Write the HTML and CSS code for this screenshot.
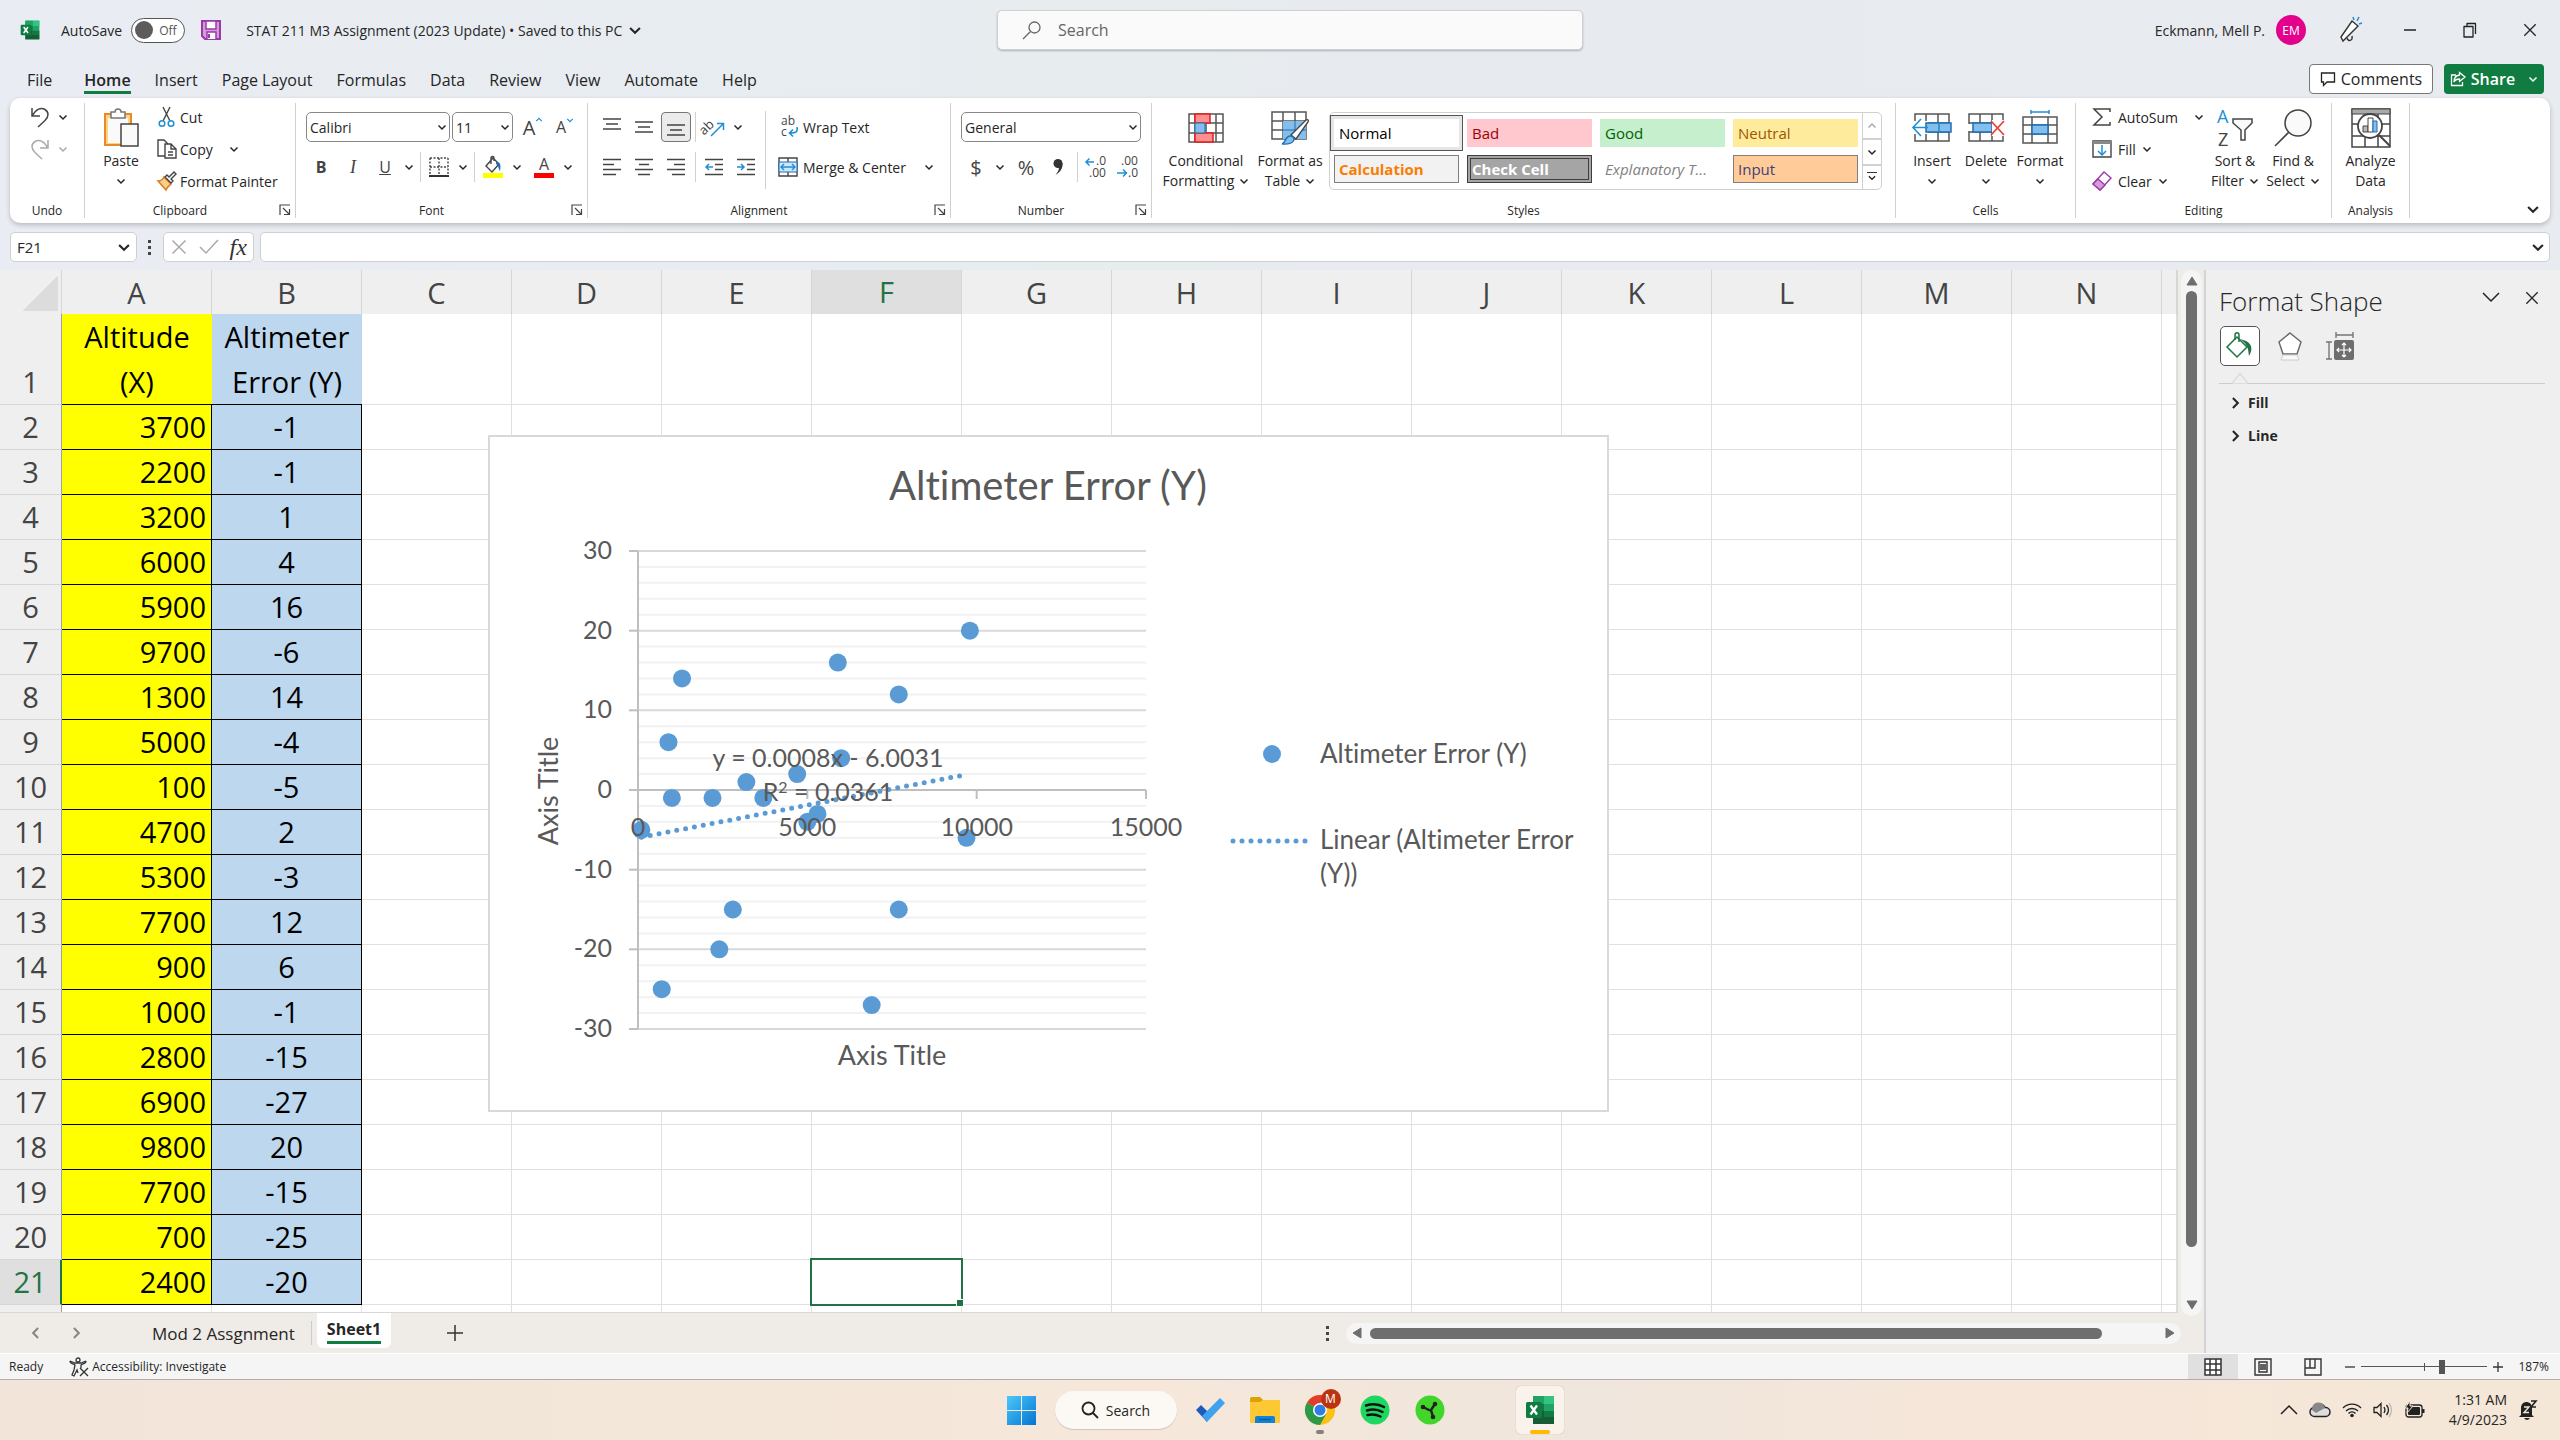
FILE: index.html
```html
<!DOCTYPE html>
<html lang="en">
<head>
    <meta charset="UTF-8">
    <meta name="viewport" content="width=device-width, initial-scale=1.0">
    <title>STAT 211 M3 Assignment (2023 Update) - Excel</title>
    <link rel="stylesheet" href="styles.css">
</head>
<body>
    <!-- Shared icons -->
    <svg class="sprite" width="0" height="0">
        <symbol id="chev" viewBox="0 0 10 10"><path d="M1.5 3.5 5 7l3.5-3.5" fill="none" stroke="currentColor" stroke-width="1.5"/></symbol>
        <symbol id="launch" viewBox="0 0 12 12"><path d="M1 11V1h10M4 4l6 6M10.500 5v5.500H5" fill="none" stroke="#444" stroke-width="1.2"/></symbol>
        <symbol id="excel" viewBox="0 0 30 30">
            <path d="M8 1h21v28H8z" fill="#21a366"/>
            <path d="M19 1h10v8H19z" fill="#33c481"/>
            <path d="M8 1h11v8H8z" fill="#21a366"/>
            <path d="M8 9h11v7H8z" fill="#107c41"/>
            <path d="M8 16h11v6H8z" fill="#185c37"/>
            <path d="M19 16h10v6H19z" fill="#107c41"/>
            <path d="M8 22h21v7H8z" fill="#185c37"/>
            <rect x="1" y="7" width="16" height="16" rx="1.500" fill="#107c41"/>
            <path d="M5.500 10.500 12 19.500M12 10.500 5.500 19.500" stroke="#fff" stroke-width="2.300"/>
        </symbol>
        <symbol id="lens" viewBox="0 0 20 20"><path d="M12.500 2a5.500 5.500 0 1 1 0 11 5.500 5.500 0 0 1 0-11zM8.500 11.500 1 19" fill="none" stroke="currentColor" stroke-width="1.3"/></symbol>
        <symbol id="cross" viewBox="0 0 16 16"><path d="M1.500 1.500l13 13M14.500 1.500l-13 13" stroke="currentColor" stroke-width="1.5"/></symbol>
    </svg>

    <header class="titlebar">
        <div class="title-left">
            <svg class="i20" viewBox="0 0 30 30"><use href="#excel"/></svg>
            <label class="autosave">AutoSave
                <span class="toggle"><input type="checkbox" aria-label="AutoSave"><span>Off</span></span>
            </label>
            <button class="save" aria-label="Save">
                <svg width="20" height="20" viewBox="0 0 20 20"><path d="M1 1h18v18H4l-3-3z" fill="#d69bdc" stroke="#9a3aa8" stroke-width="2"/><path d="M5 1h10v8H5zM6 19v-7h9v7" fill="#fff" stroke="#9a3aa8" stroke-width="1.500"/><path d="M8 14v4" stroke="#9a3aa8" stroke-width="2"/></svg>
            </button>
            <button class="doc-name">STAT 211 M3 Assignment (2023 Update) • Saved to this PC <svg class="i14"><use href="#chev"/></svg></button>
        </div>
        <label class="search">
            <svg class="i20"><use href="#lens"/></svg>
            <input type="text" placeholder="Search" aria-label="Search">
        </label>
        <div class="title-right">
            <span>Eckmann, Mell P.</span>
            <button class="avatar">EM</button>
            <button class="win" aria-label="Coming soon">
                <svg width="24" height="28" viewBox="0 0 24 28"><path d="M3 21 14 5l6 5L5 25z" fill="#fff" stroke="#333" stroke-width="1.400"/><path d="M9 22c1 4 6 3 5-2" fill="none" stroke="#333" stroke-width="1.400"/><path d="m16 4-1-3M19 5l2-4M21 8l3-1" stroke="#1e8fd5" stroke-width="1.500"/></svg>
            </button>
            <button class="win" aria-label="Minimize"><svg width="14" height="14"><path d="M1 7h12" stroke="#222" stroke-width="1.500"/></svg></button>
            <button class="win" aria-label="Restore"><svg width="16" height="16" viewBox="0 0 16 16"><path d="M2 4.500h9V15H2zM5 4V1.500h8.500V12" fill="none" stroke="#222" stroke-width="1.300" stroke-linejoin="round"/></svg></button>
            <button class="win" aria-label="Close"><svg width="14" height="14"><use href="#cross"/></svg></button>
        </div>
    </header>

    <nav class="tabs">
        <a href="#">File</a>
        <a href="#" class="active">Home</a>
        <a href="#">Insert</a>
        <a href="#">Page Layout</a>
        <a href="#">Formulas</a>
        <a href="#">Data</a>
        <a href="#">Review</a>
        <a href="#">View</a>
        <a href="#">Automate</a>
        <a href="#">Help</a>
        <div class="tab-actions">
            <button class="comments"><svg width="16" height="16" viewBox="0 0 16 16"><path d="M1.500 2h13v9H7l-3.500 3.500V11h-2z" fill="none" stroke="#222" stroke-width="1.300"/></svg>Comments</button>
            <button class="share"><svg width="16" height="16" viewBox="0 0 16 16"><path d="M6 4H1.500v10.500h11V11M9.500 1.500 15 6l-5.500 4.500V8C6.500 8 5 9 4 11c0-4 2-6.500 5.500-7z" fill="none" stroke="#fff" stroke-width="1.300"/></svg>Share<svg class="i10 share-chev"><use href="#chev"/></svg></button>
        </div>
    </nav>

    <section class="ribbon">
        <div class="group g-undo">
            <div class="group-body rows">
                <button class="split" aria-label="Undo"><svg width="20" height="22" viewBox="0 0 20 22"><path d="M2 2v8h8M2.500 9.500C6 3 11 1 15 3.500s4 7 0 11L8 21" fill="none" stroke="#444" stroke-width="1.500"/></svg><svg class="i10"><use href="#chev"/></svg></button>
                <button class="split off" aria-label="Redo"><svg width="20" height="22" viewBox="0 0 20 22"><path d="M18 2v8h-8M17.500 9.500C14 3 9 1 5 3.500s-4 7 0 11L12 21" fill="none" stroke="#aaa" stroke-width="1.500"/></svg><svg class="i10"><use href="#chev"/></svg></button>
            </div>
            <div class="group-label"><span>Undo</span></div>
        </div>

        <div class="group g-clip">
            <div class="group-body">
                <button class="big">
                    <svg width="36" height="40" viewBox="0 0 36 40"><path d="M2 6h26v31H2z" fill="#fbd67f" stroke="#e8892b" stroke-width="2"/><path d="M5 10h20v25H5z" fill="#fafafa"/><path d="M8 4h4c0-4 6-4 6 0h4v6H8z" fill="#fff" stroke="#777" stroke-width="1.500"/><path d="M18 16h17v22H18z" fill="#fafafa" stroke="#444" stroke-width="1.500"/></svg>
                    <span>Paste</span><svg class="i10"><use href="#chev"/></svg>
                </button>
                <div class="rows">
                    <button class="item"><svg width="20" height="22" viewBox="0 0 20 22"><path d="M6 1l7 14M13 1 6 15" stroke="#444" stroke-width="1.400"/><circle cx="5" cy="17.500" r="2.800" fill="none" stroke="#1e8fd5" stroke-width="1.500"/><circle cx="14" cy="17.500" r="2.800" fill="none" stroke="#1e8fd5" stroke-width="1.500"/></svg>Cut</button>
                    <button class="item"><svg width="20" height="20" viewBox="0 0 20 20"><path d="M8 17H1V1h6l4 4" fill="none" stroke="#444" stroke-width="1.400"/><path d="M8 5h6l5 5v9H8zM14 5v5h5M11 13h5M11 16h5" fill="#fff" stroke="#444" stroke-width="1.400"/></svg>Copy<svg class="i10 far"><use href="#chev"/></svg></button>
                    <button class="item"><svg width="20" height="20" viewBox="0 0 20 20"><path d="M1 10c4 0 5-2 6-4l7 7c-2 2-4 3-5 6z" fill="#f8cf8c" stroke="#e07b1a" stroke-width="1.500"/><path d="M8 6l6 6 2-2-2-2 5-5-2-2-5 5-2-2z" fill="#fff" stroke="#444" stroke-width="1.400"/></svg>Format Painter</button>
                </div>
            </div>
            <div class="group-label"><span>Clipboard</span><button class="launch" aria-label="Clipboard options"><svg width="12" height="12"><use href="#launch"/></svg></button></div>
        </div>

        <div class="group g-font">
            <div class="group-body lines">
                <div class="line">
                    <span class="combo combo-font"><select aria-label="Font"><option>Calibri</option></select><svg class="i10"><use href="#chev"/></svg></span>
                    <span class="combo combo-size"><select aria-label="Font size"><option>11</option></select><svg class="i10"><use href="#chev"/></svg></span>
                    <button class="ib" aria-label="Increase font size"><span class="glyph-lg">A</span><svg class="i8 up blue"><use href="#chev"/></svg></button>
                    <button class="ib" aria-label="Decrease font size"><span class="glyph">A</span><svg class="i8 blue"><use href="#chev"/></svg></button>
                </div>
                <div class="line">
                    <button class="ib"><b>B</b></button>
                    <button class="ib"><i class="serif">I</i></button>
                    <button class="ib"><u>U</u></button>
                    <button class="cb" aria-label="Underline options"><svg class="i10"><use href="#chev"/></svg></button>
                    <span class="sep"></span>
                    <button class="ib" aria-label="Borders"><svg width="20" height="20" viewBox="0 0 20 20"><path d="M1 1h18M1 1v17M19 1v17M10 1v17M1 10h18" stroke="#444" stroke-width="1.400" stroke-dasharray="2 1.500"/><path d="M0 19h20" stroke="#333" stroke-width="2"/></svg></button>
                    <button class="cb" aria-label="Border options"><svg class="i10"><use href="#chev"/></svg></button>
                    <span class="sep"></span>
                    <button class="ib" aria-label="Fill color"><svg width="20" height="22" viewBox="0 0 20 22"><path d="M10 2 3 10l6 6 7-8zM8 8V2c0-2 3-2 3 0v3" fill="#fff" stroke="#444" stroke-width="1.400"/><path d="M13 6c5 0 5 4 4 9-2-3-1-5-4-7" fill="#1e6fb5"/><path d="M0 17h20v5H0z" fill="#ff0"/></svg></button>
                    <button class="cb" aria-label="Fill color options"><svg class="i10"><use href="#chev"/></svg></button>
                    <button class="ib color-a" aria-label="Font color"><span>A</span></button>
                    <button class="cb" aria-label="Font color options"><svg class="i10"><use href="#chev"/></svg></button>
                </div>
            </div>
            <div class="group-label"><span>Font</span><button class="launch" aria-label="Font settings"><svg width="12" height="12"><use href="#launch"/></svg></button></div>
        </div>

        <div class="group g-align">
            <div class="group-body">
                <div class="lines">
                    <div class="line">
                        <button class="ib" aria-label="Top align"><svg width="18" height="18"><path d="M0 1h18M3 6h12M0 11h18" stroke="#444" stroke-width="1.500"/></svg></button>
                        <button class="ib" aria-label="Middle align"><svg width="18" height="18"><path d="M0 4h18M3 9h12M0 14h18" stroke="#444" stroke-width="1.500"/></svg></button>
                        <button class="ib on" aria-label="Bottom align"><svg width="18" height="18"><path d="M0 7h18M3 12h12M0 17h18" stroke="#444" stroke-width="1.500"/></svg></button>
                        <span class="sep"></span>
                        <button class="ib" aria-label="Orientation"><svg width="22" height="22" viewBox="0 0 22 22"><text x="-3" y="14" font-size="13" transform="rotate(-45 6 12)" fill="#444">ab</text><path d="M8 20 20 8M14 7.500h6.500V14" fill="none" stroke="#1e8fd5" stroke-width="1.500"/></svg></button>
                        <button class="cb" aria-label="Orientation options"><svg class="i10"><use href="#chev"/></svg></button>
                    </div>
                    <div class="line">
                        <button class="ib" aria-label="Align left"><svg width="18" height="18"><path d="M0 1.500h18M0 6.500h11M0 11.500h18M0 16.500h13" stroke="#444" stroke-width="1.500"/></svg></button>
                        <button class="ib" aria-label="Center"><svg width="18" height="18"><path d="M0 1.500h18M4 6.500h10M0 11.500h18M3 16.500h12" stroke="#444" stroke-width="1.500"/></svg></button>
                        <button class="ib" aria-label="Align right"><svg width="18" height="18"><path d="M0 1.500h18M7 6.500h11M0 11.500h18M5 16.500h13" stroke="#444" stroke-width="1.500"/></svg></button>
                        <span class="sep"></span>
                        <button class="ib" aria-label="Decrease indent"><svg width="20" height="18"><path d="M1 1.500h18M11 6.500h8M11 11.500h8M1 16.500h18" stroke="#444" stroke-width="1.500"/><path d="M9 9H2M5 6 2 9l3 3" fill="none" stroke="#1e8fd5" stroke-width="1.500"/></svg></button>
                        <button class="ib" aria-label="Increase indent"><svg width="20" height="18"><path d="M1 1.500h18M11 6.500h8M11 11.500h8M1 16.500h18" stroke="#444" stroke-width="1.500"/><path d="M1 9h7M5 6l3 3-3 3" fill="none" stroke="#1e8fd5" stroke-width="1.500"/></svg></button>
                    </div>
                </div>
                <span class="sep tall"></span>
                <div class="lines wrap-col">
                    <button class="item"><svg width="20" height="22" viewBox="0 0 20 22"><text x="3" y="9" font-size="12" fill="#444">ab</text><text x="3" y="20" font-size="12" fill="#444">c</text><path d="M19 11c1 5-1 6-7 6M15 13.500 11.500 17l3.500 3.500" fill="none" stroke="#1e8fd5" stroke-width="1.600"/></svg>Wrap Text</button>
                    <button class="item"><svg width="20" height="20" viewBox="0 0 20 20"><path d="M1 1h18v18H1zM10 1v4M10 15v4" fill="#fff" stroke="#444" stroke-width="1.400"/><path d="M1 5h18v10H1z" fill="#cfe6f7" stroke="#1e6fb5"/><path d="M3 10h14M6 7l-3 3 3 3M14 7l3 3-3 3" fill="none" stroke="#1e8fd5" stroke-width="1.400"/></svg>Merge &amp; Center<svg class="i10 far"><use href="#chev"/></svg></button>
                </div>
            </div>
            <div class="group-label"><span>Alignment</span><button class="launch" aria-label="Alignment settings"><svg width="12" height="12"><use href="#launch"/></svg></button></div>
        </div>

        <div class="group g-num">
            <div class="group-body lines">
                <div class="line">
                    <span class="combo combo-num"><select aria-label="Number format"><option>General</option></select><svg class="i10"><use href="#chev"/></svg></span>
                </div>
                <div class="line">
                    <button class="ib glyph-lg">$</button>
                    <button class="cb" aria-label="Currency options"><svg class="i10"><use href="#chev"/></svg></button>
                    <button class="ib glyph-lg percent">%</button>
                    <button class="ib" aria-label="Comma style"><svg width="12" height="18" viewBox="0 0 12 18"><circle cx="6" cy="5.500" r="4.500" fill="#333"/><path d="M10.500 5c.5 5-2 9-7 12 3-4 4-6 3-9" fill="#333"/></svg></button>
                    <span class="sep"></span>
                    <button class="ib" aria-label="Increase decimal"><svg width="22" height="22" viewBox="0 0 22 22"><text x="11" y="9" font-size="12" fill="#444">.0</text><text x="4" y="21" font-size="12" fill="#444">.00</text><path d="M9 6H1M4.500 2.500 1 6l3.500 3.500" fill="none" stroke="#1e8fd5" stroke-width="1.500"/></svg></button>
                    <button class="ib" aria-label="Decrease decimal"><svg width="22" height="22" viewBox="0 0 22 22"><text x="4" y="9" font-size="12" fill="#444">.00</text><text x="11" y="21" font-size="12" fill="#444">.0</text><path d="M0 17h9M6 13.500l3.500 3.500L6 20.500" fill="none" stroke="#1e8fd5" stroke-width="1.500"/></svg></button>
                </div>
            </div>
            <div class="group-label"><span>Number</span><button class="launch" aria-label="Number settings"><svg width="12" height="12"><use href="#launch"/></svg></button></div>
        </div>

        <div class="group g-styles">
            <div class="group-body">
                <button class="big w-cf">
                    <svg width="36" height="30" viewBox="0 0 36 30"><path d="M1 1h34v28H1zM1 10h34M1 20h34M7 1v28M18 1v28M28 1v28" fill="#fff" stroke="#555" stroke-width="1.500"/><path d="M7 1h15v9H7zM7 20h18v9H7z" fill="#ff8f8f" stroke="#e02020" stroke-width="1.500"/><path d="M7 10h10v10H7z" fill="#83beec" stroke="#1e6fb5"/></svg>
                    <span>Conditional</span><span>Formatting <svg class="i10"><use href="#chev"/></svg></span>
                </button>
                <button class="big w-fat">
                    <svg width="38" height="34" viewBox="0 0 38 34"><path d="M1 1h34v27H1zM1 10h34M1 19h34M12 1v27M24 1v27" fill="#fff" stroke="#555" stroke-width="1.500"/><path d="M12 10h23v18H12z" fill="#83beec"/><path d="M12 19h23M24 10v18" stroke="#1e6fb5"/><path d="M20 24 35 9c2-1 3 0 2 2L25 28z" fill="#fff" stroke="#444" stroke-width="1.400"/><path d="M11 33c4-1 3-9 9-8 5 1 5 9-9 8z" fill="#83beec" stroke="#1e6fb5" stroke-width="1.400"/></svg>
                    <span>Format as</span><span>Table <svg class="i10"><use href="#chev"/></svg></span>
                </button>
                <div class="gallery">
                    <div class="swatches">
                        <button class="sw normal">Normal</button>
                        <button class="sw bad">Bad</button>
                        <button class="sw good">Good</button>
                        <button class="sw neutral">Neutral</button>
                        <button class="sw calc">Calculation</button>
                        <button class="sw check">Check Cell</button>
                        <button class="sw expl">Explanatory T...</button>
                        <button class="sw input">Input</button>
                    </div>
                    <div class="gallery-nav">
                        <button class="off" aria-label="Scroll up"><svg class="i10 up"><use href="#chev"/></svg></button>
                        <button aria-label="Scroll down"><svg class="i10"><use href="#chev"/></svg></button>
                        <button class="more" aria-label="More styles"><svg class="i10"><use href="#chev"/></svg></button>
                    </div>
                </div>
            </div>
            <div class="group-label"><span>Styles</span></div>
        </div>

        <div class="group g-cells">
            <div class="group-body">
                <button class="big w-cell">
                    <svg width="40" height="36" viewBox="0 0 40 36"><path d="M3 4h34v27H3zM14 4v27M26 4v27M3 13h34M3 22h34" fill="#fff" stroke="#555" stroke-width="1.500"/><path d="M0 11h16v13H0z" fill="#fff"/><path d="M14 13h25v9H14z" fill="#83beec" stroke="#1e6fb5" stroke-width="1.500"/><path d="M27 13v9M16 17.500H2M9 9l-8 8.500L9 26" fill="none" stroke="#1e8fd5" stroke-width="1.600"/></svg>
                    <span>Insert</span><svg class="i10"><use href="#chev"/></svg>
                </button>
                <button class="big w-cell">
                    <svg width="40" height="36" viewBox="0 0 40 36"><path d="M3 4h34v27H3zM14 4v27M26 4v27M3 13h34M3 22h34" fill="#fff" stroke="#555" stroke-width="1.500"/><path d="M0 14h6v7H0z" fill="#fff"/><path d="M7 13h19v9H7z" fill="#83beec" stroke="#1e6fb5" stroke-width="1.500"/><path d="M26 10h14v16H26z" fill="#fff"/><path d="m25 11 13 14M38 11 25 25" stroke="#e8413c" stroke-width="1.800"/></svg>
                    <span>Delete</span><svg class="i10"><use href="#chev"/></svg>
                </button>
                <button class="big w-cell">
                    <svg width="40" height="36" viewBox="0 0 40 36"><path d="M3 7h34v26H3zM12 7v26M28 7v26M3 15h34M3 24h34" fill="#fff" stroke="#555" stroke-width="1.500"/><path d="M12 15h16v9H12z" fill="#83beec" stroke="#1e6fb5" stroke-width="1.500"/><path d="M11 2h18M11 0v4M29 0v4" stroke="#1e8fd5" stroke-width="1.500"/></svg>
                    <span>Format</span><svg class="i10"><use href="#chev"/></svg>
                </button>
            </div>
            <div class="group-label"><span>Cells</span></div>
        </div>

        <div class="group g-edit">
            <div class="group-body">
                <div class="rows edit-col">
                    <button class="item"><svg width="20" height="20" viewBox="0 0 20 20"><path d="M18 5V2H2l8 8-8 8h16v-3" fill="none" stroke="#444" stroke-width="1.500"/></svg>AutoSum<svg class="i10 push"><use href="#chev"/></svg></button>
                    <button class="item"><svg width="20" height="20" viewBox="0 0 20 20"><path d="M1 2h18v16H1z" fill="#fff" stroke="#444" stroke-width="1.400"/><path d="M1 2h18v3H1z" fill="#888"/><path d="M10 6v10M6 12l4 4 4-4" fill="none" stroke="#1e8fd5" stroke-width="1.500"/></svg>Fill<svg class="i10"><use href="#chev"/></svg></button>
                    <button class="item"><svg width="20" height="20" viewBox="0 0 20 20"><path d="m12 1 7 6-11 12-7-6z" fill="#fff" stroke="#9a3aa8" stroke-width="1.400"/><path d="m6 8 7 6-5 5-7-6z" fill="#d69bdc" stroke="#9a3aa8" stroke-width="1.400"/></svg>Clear<svg class="i10"><use href="#chev"/></svg></button>
                </div>
                <button class="big w-ed">
                    <svg width="38" height="38" viewBox="0 0 38 38"><text x="1" y="14" font-size="18" fill="#1e8fd5">A</text><text x="2" y="37" font-size="18" fill="#444">Z</text><path d="M17 10h19v4l-7 7v10h-4V21l-8-7z" fill="#fafafa" stroke="#444" stroke-width="1.500"/></svg>
                    <span>Sort &amp;</span><span>Filter <svg class="i10"><use href="#chev"/></svg></span>
                </button>
                <button class="big w-ed">
                    <svg width="38" height="38" viewBox="0 0 38 38"><circle cx="24" cy="14" r="13" fill="#fafafa" stroke="#444" stroke-width="1.500"/><path d="M15 23 1 37" stroke="#444" stroke-width="1.600"/></svg>
                    <span>Find &amp;</span><span>Select <svg class="i10"><use href="#chev"/></svg></span>
                </button>
            </div>
            <div class="group-label"><span>Editing</span></div>
        </div>

        <div class="group g-an">
            <div class="group-body">
                <button class="big w-an">
                    <svg width="40" height="40" viewBox="0 0 40 40"><path d="M1 1h38v38H1zM1 16h38M1 28h38M14 6v33M27 6v33" fill="#fff" stroke="#444" stroke-width="1.500"/><path d="M1 1h38v5H1z" fill="#aaa" stroke="#444"/><circle cx="19" cy="18" r="12" fill="#fff" stroke="#444" stroke-width="1.800"/><path d="m28 27 11 11" stroke="#444" stroke-width="2"/><path d="M12 18h5v6h-5z" fill="#bbb" stroke="#444"/><path d="M17 10h5v14h-5z" fill="#fff" stroke="#444"/><path d="M22 13h4v11h-4z" fill="#83beec" stroke="#1e6fb5"/></svg>
                    <span>Analyze</span><span>Data</span>
                </button>
            </div>
            <div class="group-label"><span>Analysis</span></div>
        </div>

        <button class="collapse" aria-label="Collapse ribbon"><svg class="i14"><use href="#chev"/></svg></button>
    </section>

    <section class="formula-bar">
        <label class="box name-box"><input type="text" value="F21" aria-label="Name box"><svg class="i14"><use href="#chev"/></svg></label>
        <span class="dots"><i></i><i></i><i></i></span>
        <div class="box fx-box">
            <button aria-label="Cancel"><svg width="16" height="16"><use href="#cross"/></svg></button>
            <button aria-label="Enter"><svg width="20" height="16"><path d="m1 8 6 6L19 1" fill="none" stroke="#aaa" stroke-width="1.500"/></svg></button>
            <button class="fx">fx</button>
        </div>
        <label class="box formula"><input type="text" aria-label="Formula"><svg class="i14"><use href="#chev"/></svg></label>
    </section>

    <main class="work">
        <div class="book">
            <div class="sheet-row">
                <div class="sheet">
                    <table id="grid">
                        <colgroup id="cols"></colgroup>
                        <thead></thead>
                        <tbody></tbody>
                    </table>
                    <svg id="chart" class="chart" width="1117" height="673" viewBox="0 0 1117 673"></svg>
                </div>
                <div class="vscroll">
                    <div class="track">
                        <svg width="12" height="10"><path d="M6 1 11 9H1z" fill="#6e6e6e" stroke="#6e6e6e" stroke-linejoin="round"/></svg>
                        <span class="thumb"></span>
                        <svg width="12" height="10"><path d="M6 9 11 1H1z" fill="#6e6e6e" stroke="#6e6e6e" stroke-linejoin="round"/></svg>
                    </div>
                </div>
            </div>
            <div class="sheet-tabs">
                <button class="nav-arrow" aria-label="Previous sheet"><svg class="i14 left"><use href="#chev"/></svg></button>
                <button class="nav-arrow" aria-label="Next sheet"><svg class="i14 right"><use href="#chev"/></svg></button>
                <button class="sheet-tab">Mod 2 Assgnment</button>
                <button class="sheet-tab current"><span>Sheet1</span></button>
                <button class="add" aria-label="New sheet"><svg width="16" height="16"><path d="M8 0v16M0 8h16" stroke="#333" stroke-width="1.500"/></svg></button>
                <span class="dots"><i></i><i></i><i></i></span>
                <div class="hscroll">
                    <svg width="10" height="12"><path d="M1 6 9 1v10z" fill="#6e6e6e" stroke="#6e6e6e" stroke-linejoin="round"/></svg>
                    <div class="hroom"><span class="thumb"></span></div>
                    <svg width="10" height="12"><path d="M9 6 1 1v10z" fill="#6e6e6e" stroke="#6e6e6e" stroke-linejoin="round"/></svg>
                </div>
            </div>
        </div>

        <aside class="pane">
            <div class="pane-head">
                <h2>Format Shape</h2>
                <button aria-label="Pane options"><svg width="20" height="12"><path d="m2 1 8 8 8-8" fill="none" stroke="#222" stroke-width="1.500"/></svg></button>
                <button aria-label="Close pane"><svg width="14" height="14"><use href="#cross"/></svg></button>
            </div>
            <div class="pane-icons">
                <button class="on" aria-label="Fill and line"><svg width="28" height="28" viewBox="0 0 28 28"><path d="M11 5 1 15l10 10 10-10z" fill="#fff" stroke="#217346" stroke-width="1.500"/><path d="M9 8V3c0-3 4-3 4 0v7" fill="none" stroke="#217346" stroke-width="1.500"/><path d="M14 7c9 2 15 7 9 17-1-6 0-11-9-17z" fill="#217346"/></svg></button>
                <button aria-label="Effects"><svg width="26" height="30" viewBox="0 0 26 30"><path d="m13 2 11 9-4 12H6L2 11z" fill="#fff" stroke="#666" stroke-width="1.400"/><path d="M6 24h14l2 5H4z" fill="#fafafa" stroke="#ccc"/></svg></button>
                <button aria-label="Size and properties"><svg width="28" height="28" viewBox="0 0 28 28"><path d="M10 3h17M10 0v6M27 0v6M3 10v17M0 10h6M0 27h6" stroke="#777" stroke-width="1.400"/><rect x="8" y="8" width="20" height="20" rx="2" fill="#6e6e6e"/><path d="M18 11v14M11 18h14M16 13l2-2 2 2M16 23l2 2 2-2M13 16l-2 2 2 2M23 16l2 2-2 2" fill="none" stroke="#fff" stroke-width="1.200"/></svg></button>
            </div>
            <div class="pane-line"><svg width="18" height="12"><path d="M0 11.500h1l8-10 8 10h1" fill="#efefef" stroke="#ccc"/></svg></div>
            <button class="section"><svg class="i14 right"><use href="#chev"/></svg>Fill</button>
            <button class="section"><svg class="i14 right"><use href="#chev"/></svg>Line</button>
        </aside>
    </main>

    <footer class="status">
        <span>Ready</span>
        <button class="access"><svg width="20" height="20" viewBox="0 0 20 20"><circle cx="9" cy="3" r="2" fill="none" stroke="#333" stroke-width="1.300"/><path d="M1 4c0 3 4 3 5 4l-1 5-2 5 2 1 3-6 1 3M17 4c0 3-4 3-5 4v3M1 4l5 2h6l5-2M11 11l8 8M19 11l-8 8" fill="none" stroke="#333" stroke-width="1.300"/></svg>Accessibility: Investigate</button>
        <div class="views">
            <button class="on" aria-label="Normal view"><svg width="18" height="18"><path d="M1 1h16v16H1zM1 6h16M1 12h16M6 1v16M12 1v16" fill="#fff" stroke="#333" stroke-width="1.500"/></svg></button>
            <button aria-label="Page layout view"><svg width="18" height="18"><path d="M1 1h16v16H1zM5 4h8v10H5zM6 7h6M6 9h6M6 11h6" fill="none" stroke="#333" stroke-width="1.400"/></svg></button>
            <button aria-label="Page break view"><svg width="18" height="18"><path d="M1 1h16v16H1zM1 10h10V1M6 1v9" fill="none" stroke="#333" stroke-width="1.400"/></svg></button>
        </div>
        <div class="zoom">
            <button aria-label="Zoom out"><svg width="12" height="12"><path d="M1 6h10" stroke="#333" stroke-width="1.300"/></svg></button>
            <input type="range" min="0" max="100" value="65" aria-label="Zoom">
            <button aria-label="Zoom in"><svg width="12" height="12"><path d="M1 6h10M6 1v10" stroke="#333" stroke-width="1.300"/></svg></button>
            <span class="pct">187%</span>
        </div>
    </footer>

    <div class="taskbar">
        <div class="apps">
            <button class="app" aria-label="Start"><svg width="29" height="29"><defs><linearGradient id="win" x1="0" y1="0" x2="29" y2="29" gradientUnits="userSpaceOnUse"><stop offset="0" stop-color="#4cc9fb"/><stop offset="1" stop-color="#0274d1"/></linearGradient></defs><path d="M0 0h14v14H0zM15 0h14v14H15zM0 15h14v14H0zM15 15h14v14H15z" fill="url(#win)"/></svg></button>
            <button class="task-search"><svg width="18" height="18"><circle cx="7.500" cy="7.500" r="6" fill="none" stroke="#222" stroke-width="1.800"/><path d="m12 12 5 5" stroke="#222" stroke-width="1.800"/></svg>Search</button>
            <button class="app" aria-label="To Do"><svg width="30" height="26" viewBox="0 0 30 26"><path d="M1 13 6 8l8 8-2 9z" fill="#1b5bbd"/><path d="M7 19 25 1l5 5-18 19z" fill="#3fa2ee"/></svg></button>
            <button class="app" aria-label="File Explorer"><svg width="30" height="28" viewBox="0 0 30 28"><path d="M0 3q0-2 2-2h8l3 3v6H0z" fill="#dba106"/><path d="M0 6h10l3-2h17v22q0 1-1 1H1q-1 0-1-1z" fill="#fdc834"/><path d="M5 27v-5q0-2 2-2h16q2 0 2 2v5z" fill="#1182d8"/><path d="M9 23.500h12" stroke="#0b5aa3" stroke-width="1.500"/></svg></button>
            <button class="app run" aria-label="Chrome">
                <svg width="30" height="30" viewBox="0 0 30 30"><circle cx="15" cy="15" r="15" fill="#fbc116"/><path d="M15 15 2 7.500A15 15 0 0 1 28 7.500H15z" fill="#e33b2e"/><path d="M2 7.500A15 15 0 0 0 15 30l6.500-11.500L15 15z" fill="#2d9a47"/><circle cx="15" cy="15" r="7" fill="#fff"/><circle cx="15" cy="15" r="5.500" fill="#2f7de9"/></svg>
                <span class="badge">M</span>
            </button>
            <button class="app" aria-label="Spotify"><svg width="30" height="30" viewBox="0 0 30 30"><circle cx="15" cy="15" r="14.500" fill="#1ed760"/><path d="M6 10.500c6-2 13-1.500 18 1.500M7 15.500c5-1.500 11-1 15.500 1.500M7.500 20c4-1 9-.5 13 1.500" fill="none" stroke="#111" stroke-width="2.500" stroke-linecap="round"/></svg></button>
            <button class="app" aria-label="Network"><svg width="30" height="30" viewBox="0 0 30 30"><circle cx="15" cy="15" r="14.500" fill="#43d62a"/><path d="M8 12l7 3.500M20 9l-4 6 2 7" fill="none" stroke="#222" stroke-width="2.500"/><circle cx="8" cy="12" r="2.300" fill="#222"/><circle cx="20" cy="9" r="2.300" fill="#222"/><circle cx="18" cy="22" r="2.300" fill="#222"/></svg></button>
            <span class="app"></span>
            <button class="app excel" aria-label="Excel"><svg width="30" height="30"><use href="#excel"/></svg></button>
        </div>
        <div class="tray">
            <button aria-label="Hidden icons"><svg width="18" height="12"><path d="m1 10 8-8 8 8" fill="none" stroke="#222" stroke-width="1.500"/></svg></button>
            <button aria-label="OneDrive"><svg width="22" height="16" viewBox="0 0 22 16"><path d="M6 14.500a4.500 4.500 0 0 1-1-9 6 6 0 0 1 11 0 4.500 4.500 0 0 1 1 9z" fill="#ddd" stroke="#222" stroke-width="1.400"/><path d="M3 8a6 6 0 0 1 13-2L7 11z" fill="#888"/></svg></button>
            <button aria-label="Wi-Fi"><svg width="20" height="16" viewBox="0 0 20 16"><path d="M1 6a12.500 12.500 0 0 1 18 0M4 9a8.500 8.500 0 0 1 12 0M6.500 11.500a5 5 0 0 1 7 0" fill="none" stroke="#222" stroke-width="1.400"/><circle cx="10" cy="13.500" r="1.800" fill="#222"/></svg></button>
            <button aria-label="Volume"><svg width="20" height="16" viewBox="0 0 20 16"><path d="M1 5.500h3l4-4v13l-4-4H1zM11 5q2 3 0 6M13.500 3q4 5 0 10" fill="none" stroke="#222" stroke-width="1.300"/><path d="M16 1q5 7 0 14" fill="none" stroke="#bbb" stroke-width="1.300"/></svg></button>
            <button aria-label="Battery"><svg width="21" height="18" viewBox="0 0 21 18"><rect x="2" y="4" width="16" height="12" rx="2.500" fill="none" stroke="#222" stroke-width="1.300"/><rect x="4" y="6" width="12" height="8" rx="1" fill="#222"/><path d="M18 8h2.500v4H18z" fill="#222"/><path d="M6 0 1 7h3l-1 5 6-7H6z" fill="#222" stroke="#f5e6d8"/></svg></button>
            <button class="clock"><span>1:31 AM</span><span>4/9/2023</span></button>
            <button aria-label="Notifications"><svg width="20" height="22" viewBox="0 0 20 22"><path d="M3 16V9c0-8 11-8 11 0v7l2 2H1zM6 19h6q-3 4-6 0z" fill="#222"/><path d="M6 8h5l-5 5.500h5" fill="none" stroke="#f5e6d8" stroke-width="1.400"/><path d="M13 2h5l-5 6h5" fill="none" stroke="#222" stroke-width="1.600"/></svg></button>
        </div>
    </div>

    <script src="script.js"></script>
</body>
</html>
```
FILE: styles.css
```css
* {
    box-sizing: border-box;
}
body {
    margin: 0;
    height: 100vh;
    display: flex;
    flex-direction: column;
    overflow: hidden;
    font-family: "Open Sans", "Noto Sans", sans-serif;
    font-size: 14px;
    color: #262626;
    background: linear-gradient(90deg, #e9edf3, #e7ecef 45%, #e7eaef 60%, #e8ebf0);
}
button, input, select {
    font: inherit;
    color: inherit;
    border: none;
    background: none;
    padding: 0;
    margin: 0;
    outline: none;
}
button {
    display: flex;
    align-items: center;
    justify-content: center;
    white-space: nowrap;
}
svg {
    flex: none;
    display: block;
    overflow: visible;
}
.sprite {
    position: absolute;
}
.i8 { width: 8px; height: 8px; }
.i10 { width: 10px; height: 10px; }
.i14 { width: 14px; height: 14px; }
.i20 { width: 20px; height: 20px; }
.up { transform: rotate(180deg); }
.left { transform: rotate(90deg); }
.right { transform: rotate(-90deg); }
.blue { color: #1e8fd5; }
.off { color: #aaa; }

/* Title bar */
.titlebar {
    display: grid;
    grid-template-columns: 1fr 586px 1fr;
    align-items: center;
    height: 60px;
    flex: none;
    padding-left: 20px;
}
.title-left {
    display: flex;
    align-items: center;
}
.autosave {
    display: flex;
    align-items: center;
    gap: 9px;
    margin-left: 21px;
}
.toggle {
    display: flex;
    align-items: center;
    gap: 6px;
    width: 54px;
    height: 25px;
    padding-left: 3px;
    border: 1px solid #555;
    border-radius: 13px;
    background: #fff;
    font-size: 12px;
    color: #555;
}
.toggle input {
    appearance: none;
    width: 18px;
    height: 18px;
    border-radius: 50%;
    background: #5c5c5c;
}
.save {
    margin-left: 16px;
}
.doc-name {
    gap: 6px;
    margin-left: 25px;
}
.search {
    display: flex;
    align-items: center;
    gap: 16px;
    height: 40px;
    padding-left: 24px;
    border: 1px solid #cfd2d4;
    border-radius: 5px;
    background: #fafafa;
    box-shadow: 0 1px 2px rgba(0, 0, 0, 0.25);
    color: #666;
    font-size: 16px;
    margin-bottom: 1px;
}
.search input {
    flex: 1;
}
.search input::placeholder {
    color: #666;
}
.title-right {
    display: flex;
    align-items: center;
    justify-content: flex-end;
}
.avatar {
    width: 30px;
    height: 30px;
    border-radius: 50%;
    background: #e3008c;
    color: #fff;
    font-size: 12px;
    margin: 0 14px 0 11px;
}
.win {
    width: 60px;
}

/* Ribbon tabs */
.tabs {
    display: flex;
    align-items: center;
    gap: 24px;
    height: 38px;
    flex: none;
    padding: 0 16px 0 27px;
    font-size: 16px;
}
.tabs a {
    color: inherit;
    text-decoration: none;
    height: 30px;
    line-height: 32px;
}
.tabs a:first-child {
    margin-right: 8px;
}
.tabs .active {
    font-weight: 600;
    border-bottom: 3px solid #107c41;
}
.tab-actions {
    display: flex;
    gap: 11px;
    margin-left: auto;
}
.comments, .share {
    height: 30px;
    gap: 5px;
    border-radius: 4px;
}
.comments {
    width: 124px;
    border: 1px solid #777;
    background: #fff;
}
.share {
    width: 100px;
    background: #107c41;
    color: #fff;
    font-weight: 600;
}
.share-chev {
    margin-left: 8px;
}

/* Ribbon */
.ribbon {
    display: flex;
    flex: none;
    height: 125px;
    margin: 0 10px;
    padding: 5px 0;
    border-radius: 10px;
    background: #fff;
    box-shadow: 0 2px 5px rgba(0, 0, 0, 0.22);
}
.group {
    display: flex;
    flex-direction: column;
    flex: none;
    border-right: 1px solid #d0d0d0;
}
.group-body {
    display: flex;
    flex: 1;
}
.group-label {
    display: flex;
    align-items: center;
    height: 16px;
    font-size: 12px;
}
.group-label span {
    flex: 1;
    text-align: center;
}
.launch {
    width: 20px;
}
.g-undo { width: 75px; }
.g-clip { width: 211px; }
.g-font { width: 292px; }
.g-align { width: 363px; }
.g-num { width: 201px; }
.g-styles { width: 744px; }
.g-cells { width: 180px; }
.g-edit { width: 256px; }
.g-an { width: 78px; }

.rows {
    display: flex;
    flex-direction: column;
    margin-top: -2px;
}
.g-undo .rows {
    padding-left: 20px;
}
.split {
    gap: 8px;
    height: 32px;
    justify-content: flex-start;
}
.item {
    gap: 3px;
    height: 32px;
    justify-content: flex-start;
}
.item .far {
    margin-left: 13px;
}
.item .push {
    margin-left: auto;
}
.big {
    flex-direction: column;
    justify-content: flex-start;
    width: 72px;
    height: 88px;
    line-height: 20px;
    padding-top: 1px;
}
.big > svg:first-child {
    margin: auto;
}
.big > svg:last-child {
    margin: 5px 0;
}
.big span {
    display: flex;
    align-items: center;
    gap: 5px;
}
.w-cf { width: 96px; margin-left: 6px; }
.w-fat { width: 72px; }
.w-cell { width: 54px; }
.w-ed { width: 58px; }
.w-an { width: 77px; }
.g-cells .group-body { padding-left: 9px; }
.edit-col {
    width: 112px;
    margin-left: 16px;
    margin-right: 2px;
}
.edit-col .item {
    gap: 6px;
}

.lines {
    display: flex;
    flex-direction: column;
    gap: 10px;
    padding: 9px 0 0 9px;
}
.line {
    display: flex;
    align-items: center;
    height: 30px;
}
.g-align .lines {
    padding-left: 8px;
}
.g-align .wrap-col {
    padding-left: 12px;
}
.wrap-col .item {
    gap: 5px;
    height: 30px;
}
.ib {
    width: 32px;
    height: 30px;
    font-size: 16px;
    color: #444;
}
.ib.on {
    width: 30px;
    margin: 0 1px;
    border: 1px solid #777;
    border-radius: 4px;
    background: #ebebeb;
}
.ib .i8 {
    align-self: flex-start;
    margin-top: 4px;
}
.glyph-lg {
    font-size: 20px;
}
.percent {
    margin-left: 2px;
}
.serif {
    font-family: "Liberation Serif", serif;
    font-size: 18px;
}
.cb {
    width: 16px;
    height: 30px;
}
.color-a {
    margin-left: 3px;
}
.color-a span {
    width: 20px;
    line-height: 17px;
    border-bottom: 5px solid #f00;
}
.sep {
    width: 1px;
    height: 30px;
    margin: 0 2px 0 3px;
    background: #d0d0d0;
}
.sep.tall {
    height: 78px;
    margin: 8px 0 0 3px;
}
.combo {
    display: grid;
    grid-template-columns: 1fr 12px;
    align-items: center;
    height: 30px;
    border: 1px solid #888;
    border-radius: 5px;
    margin: 0 1px;
}
.combo select {
    appearance: none;
    grid-area: 1 / 1 / 2 / 3;
    height: 28px;
    padding-left: 3px;
}
.combo svg {
    grid-area: 1 / 2;
    pointer-events: none;
}
.combo-font { width: 144px; }
.combo-size { width: 61px; margin-right: 4px; }
.combo-num { width: 180px; }

/* Cell styles gallery */
.gallery {
    display: flex;
    width: 553px;
    height: 78px;
    margin: 9px 0 0 3px;
    border: 1px solid #d0d0d0;
    border-radius: 5px;
}
.swatches {
    flex: 1;
    display: grid;
    grid-template-columns: repeat(4, 125px);
    grid-auto-rows: 28px;
    gap: 8px;
    padding: 6px 4px;
}
.sw {
    justify-content: flex-start;
    padding-left: 5px;
    font-size: 15px;
}
.normal { outline: 1px solid #555; outline-offset: 3px; box-shadow: 0 0 0 3px #e6e6e6; color: #000; }
.bad { background: #ffc7ce; color: #9c0006; }
.good { background: #c6efce; color: #006100; }
.neutral { background: #ffeb9c; color: #9c5700; }
.calc { background: #f2f2f2; color: #fa7d00; border: 1px solid #7f7f7f; font-weight: 700; padding-left: 4px; }
.check { background: #a5a5a5; color: #fff; border: 4px double #3f3f3f; font-weight: 700; padding-left: 1px; }
.expl { color: #7f7f7f; font-style: italic; }
.input { background: #ffcc99; color: #3f3f76; border: 1px solid #7f7f7f; padding-left: 4px; }
.gallery-nav {
    display: grid;
    grid-template-rows: repeat(3, 1fr);
    width: 19px;
    border-left: 1px solid #d0d0d0;
}
.gallery-nav button + button {
    border-top: 2px solid #d0d0d0;
}
.gallery-nav .more svg {
    border-top: 1px solid #333;
}
.collapse {
    margin: 0 10px 2px auto;
    align-self: flex-end;
}

/* Formula bar */
.formula-bar {
    display: flex;
    align-items: center;
    flex: none;
    height: 47px;
    padding: 1px 10px 0;
}
.box {
    display: flex;
    align-items: center;
    height: 30px;
    border: 1px solid #cfcfcf;
    border-radius: 5px;
    background: #fff;
    padding-right: 5px;
}
.box input {
    flex: 1;
    min-width: 0;
    padding-left: 6px;
    font-size: 15px;
}
.name-box {
    width: 127px;
}
.dots {
    display: grid;
    gap: 3px;
    margin: 0 12px 0 11px;
}
.dots i {
    width: 3px;
    height: 3px;
    background: #444;
}
.fx-box {
    width: 91px;
    padding: 0;
    margin-right: 6px;
    color: #aaa;
}
.fx-box button {
    flex: 1;
}
.fx-box .fx {
    font-family: "Liberation Serif", serif;
    font-style: italic;
    font-size: 24px;
    line-height: 24px;
    color: #333;
}
.formula {
    flex: 1;
    padding-right: 4px;
}

/* Workbook */
.work {
    display: flex;
    flex: 1;
    min-height: 0;
}
.book {
    display: flex;
    flex-direction: column;
    flex: 1;
    min-width: 0;
    background: #efebe7;
}
.sheet-row {
    display: flex;
    flex: 1;
    min-height: 0;
}
.sheet {
    position: relative;
    flex: 1;
    min-width: 0;
    overflow: hidden;
    background: #fff;
    border-right: 1px solid #d8d8d8;
    border-bottom: 1px solid #d8d8d8;
}
#grid {
    table-layout: fixed;
    width: 100%;
    border-collapse: separate;
    border-spacing: 0;
    font-size: 29px;
    line-height: 44px;
    color: #000;
}
#grid .rowhead-col { width: 62px; }
#grid .data-col { width: 150px; }
#grid th {
    padding: 0;
    height: 44px;
    font-weight: 400;
    line-height: 43px;
    color: #444;
    background: #efefef;
    border-right: 1px solid #d6d6d6;
    border-bottom: 1px solid #a0a0a0;
}
#grid tbody th {
    height: 45px;
    line-height: 44px;
    vertical-align: bottom;
    border-right-color: #a0a0a0;
    border-bottom-color: #d6d6d6;
}
#grid thead th.picked {
    background: #dfdfdf;
    color: #217346;
    line-height: 42px;
    border-bottom: 2px solid #217346;
}
#grid tbody th.picked {
    background: #dfdfdf;
    color: #217346;
    border-right: 2px solid #217346;
}
#grid .corner {
    background: linear-gradient(to bottom right, #efefef 50%, #dcdcdc 50%) no-repeat 22px 5px / 36px 36px #efefef;
}
#grid td {
    height: 45px;
    padding: 0;
    border-right: 1px solid #e0e0e0;
    border-bottom: 1px solid #e0e0e0;
}
#grid tr:last-child th, #grid tr:last-child td {
    border-bottom: none;
}
#grid .alt, #grid .err {
    border-color: #000;
    text-align: center;
}
#grid .alt { background: #ff0; }
#grid .err { background: #bdd7ee; }
#grid td.alt.num {
    text-align: right;
    padding-right: 5px;
}
#grid .title {
    line-height: 45px;
    height: 90px;
    padding: 0 4px;
    border-right: none;
}
#grid tbody tr:first-child th {
    height: 90px;
}
#grid .selected {
    position: relative;
}
#grid .selected::before {
    content: "";
    position: absolute;
    inset: -2px;
    border: 2px solid #217346;
}
#grid .selected::after {
    content: "";
    position: absolute;
    right: -3px;
    bottom: -3px;
    width: 6px;
    height: 6px;
    background: #217346;
    border: 1px solid #fff;
}
/* Chart object floats over the cells */
.chart {
    box-sizing: content-box;
    position: absolute;
    left: 488px;
    top: 165px;
    background: #fff;
    border: 2px solid #d9d9d9;
    font-family: Lato, "Open Sans", sans-serif;
    font-size: 25px;
    font-variant-ligatures: none;
}
.chart text { fill: #595959; }
.chart .chart-title { font-size: 40px; }
.chart .axis-title { font-size: 27px; }
.chart .legend { font-size: 26px; }
.chart .major { stroke: #d9d9d9; stroke-width: 2; }
.chart .minor { stroke: #f2f2f2; stroke-width: 2; }
.chart .axis { stroke: #bfbfbf; stroke-width: 2; }
.chart .dot { fill: #5b9bd5; }
.chart .trend {
    stroke: #5b9bd5;
    stroke-width: 5;
    stroke-linecap: round;
    stroke-dasharray: 0 9;
}
.vscroll {
    width: 26px;
    padding: 0 2px 0 3px;
    margin-bottom: -3px;
}
.track {
    display: flex;
    flex-direction: column;
    align-items: center;
    gap: 5px;
    height: 100%;
    padding: 6px 0;
    border-radius: 11px;
    background: #f5f5f5;
}
.thumb {
    display: block;
    background: #6e6e6e;
    border-radius: 6px;
}
.track .thumb {
    width: 11px;
    flex: 1;
    margin-bottom: 48px;
}

/* Sheet tabs */
.sheet-tabs {
    display: flex;
    align-items: center;
    flex: none;
    height: 40px;
    padding: 0 23px 0 16px;
    font-size: 17px;
}
.sheet-tabs .dots {
    margin-right: 17px;
}
.nav-arrow {
    width: 40px;
    color: #888;
}
.sheet-tab {
    height: 24px;
    padding: 0 16px;
    border-right: 1px solid #ccc;
}
.nav-arrow + .sheet-tab {
    margin-left: 40px;
}
.sheet-tab.current {
    align-self: flex-start;
    height: 35px;
    padding: 0 10px;
    margin-left: 5px;
    background: #fff;
    border: none;
    border-radius: 0 0 6px 6px;
    font-size: 16px;
    font-weight: 700;
}
.current span {
    line-height: 24px;
    border-bottom: 3px solid #107c41;
}
.add {
    margin: 0 auto 0 50px;
    padding-left: 6px;
}
.hscroll {
    display: flex;
    align-items: center;
    gap: 8px;
    width: 835px;
    height: 21px;
    padding: 0 6px;
    border-radius: 11px;
    background: #f5f5f5;
}
.hroom {
    flex: 1;
}
.hroom .thumb {
    width: 93%;
    height: 11px;
}

/* Format pane */
.pane {
    width: 356px;
    padding: 11px 15px 0 13px;
    background: #efefef;
    border-left: 2px solid #d4d4d4;
}
.pane-head {
    display: flex;
    align-items: center;
    gap: 24px;
    height: 40px;
    padding-right: 6px;
}
.pane-head h2 {
    flex: 1;
    margin: 0;
    font-size: 26px;
    font-weight: 300;
}
.pane-head button {
    padding-bottom: 7px;
}
.pane-icons {
    display: flex;
    gap: 10px;
    margin-top: 5px;
    padding-left: 1px;
}
.pane-icons button {
    width: 40px;
    height: 40px;
    border-radius: 5px;
}
.pane-icons .on {
    background: #fff;
    border: 1px solid #555;
}
.pane-line {
    height: 18px;
    padding: 6px 0 0 12px;
    border-bottom: 1px solid #ccc;
}
.section {
    height: 33px;
    gap: 6px;
    padding-left: 9px;
    font-weight: 700;
}
.pane-line + .section {
    margin-top: 2px;
}

/* Status bar */
.status {
    display: flex;
    align-items: stretch;
    flex: none;
    height: 27px;
    padding: 0 11px 0 9px;
    background: #f5f5f5;
    border-top: 1px solid #fff;
    border-bottom: 1px solid #b5aca6;
    font-size: 12px;
    line-height: 26px;
}
.access {
    gap: 3px;
    margin-left: 26px;
}
.views {
    display: flex;
    margin-left: auto;
}
.views button {
    width: 50px;
}
.views .on {
    background: #e0e0e0;
}
.zoom {
    display: flex;
    align-items: center;
    gap: 5px;
    padding-left: 6px;
}
.zoom input {
    appearance: none;
    width: 126px;
    height: 16px;
    background:
        linear-gradient(#555, #555) center / 1px 8px no-repeat,
        linear-gradient(#555, #555) center / 100% 1px no-repeat;
}
.zoom input::-webkit-slider-thumb {
    appearance: none;
    width: 6px;
    height: 14px;
    background: #555;
}
.zoom input::-moz-range-thumb {
    width: 6px;
    height: 14px;
    border: none;
    border-radius: 0;
    background: #555;
}
.pct {
    width: 40px;
    text-align: right;
}

/* Taskbar */
.taskbar {
    display: grid;
    grid-template-columns: 1fr auto 1fr;
    align-items: center;
    height: 60px;
    flex: none;
    background: linear-gradient(90deg, #f3e4d9, #f2e7d9 25%, #f6e7da 45%, #efe6dd 62%, #f5e6d9 75%, #f5e7d8);
}
.apps {
    grid-column: 2;
    display: flex;
    align-items: center;
}
.app {
    position: relative;
    width: 55px;
    height: 48px;
}
.task-search {
    width: 122px;
    height: 38px;
    margin: 0 6px;
    gap: 7px;
    border-radius: 19px;
    background: #fcf8f4;
    box-shadow: 0 1px 1px rgba(0, 0, 0, 0.15);
}
.badge {
    position: absolute;
    top: 3px;
    left: 28px;
    width: 20px;
    height: 20px;
    line-height: 20px;
    border-radius: 50%;
    background: #bb3410;
    color: #fff;
    font-size: 12px;
}
.run::after, .excel::after {
    content: "";
    position: absolute;
    bottom: 0;
    left: 50%;
    width: 8px;
    height: 4px;
    margin-left: -4px;
    border-radius: 2px;
    background: #8a807a;
}
.excel {
    width: 48px;
    margin: 0 3px;
    border-radius: 5px;
    background: #faf3ec;
    box-shadow: 0 0 1px rgba(0, 0, 0, 0.3);
}
.excel::after {
    width: 20px;
    margin-left: -10px;
    background: #ffb900;
}
.tray {
    display: flex;
    align-items: center;
    justify-content: flex-end;
    gap: 11px;
    padding-right: 22px;
}
.clock {
    flex-direction: column;
    align-items: flex-end;
    width: 71px;
    line-height: 20px;
}
```
FILE: script.js
```js
const altitude = [3700, 2200, 3200, 6000, 5900, 9700, 1300, 5000, 100, 4700, 5300, 7700, 900, 1000, 2800, 6900, 9800, 7700, 700, 2400];
const error = [-1, -1, 1, 4, 16, -6, 14, -4, -5, 2, -3, 12, 6, -1, -15, -27, 20, -15, -25, -20];
const letters = "ABCDEFGHIJKLMN".split("");

// Sheet
function buildGrid() {
    const cols = document.getElementById("cols");
    cols.innerHTML = '<col class="rowhead-col">' + letters.map(() => '<col class="data-col">').join("") + "<col>";

    let head = '<tr><th class="corner"></th>';
    letters.forEach(l => {
        head += `<th class="${l === "F" ? "picked" : ""}">${l}</th>`;
    });
    document.querySelector("#grid thead").innerHTML = head + "<th></th></tr>";

    let body = "";
    for (let r = 1; r <= 21; r++) {
        body += `<tr><th class="${r === 21 ? "picked" : ""}">${r}</th>`;
        if (r === 1) {
            body += '<td class="alt title">Altitude<br>(X)</td><td class="err title">Altimeter Error (Y)</td>';
        } else {
            body += `<td class="alt num">${altitude[r - 2]}</td><td class="err">${error[r - 2]}</td>`;
        }
        for (let c = 2; c < letters.length; c++) {
            body += `<td class="${r === 21 && letters[c] === "F" ? "selected" : ""}"></td>`;
        }
        body += "<td></td></tr>";
    }
    // start of the next row, cut off by the tab bar
    body += "<tr><th></th>" + "<td></td>".repeat(letters.length + 1) + "</tr>";
    document.querySelector("#grid tbody").innerHTML = body;
}

// Scatter chart
function buildChart() {
    const left = 148, right = 656, top = 114, bottom = 592;
    const px = v => left + (v / 15000) * (right - left);
    const py = v => top + ((30 - v) / 60) * (bottom - top);
    const line = (cls, x1, y1, x2, y2) => `<line class="${cls}" x1="${x1}" y1="${y1}" x2="${x2}" y2="${y2}"/>`;
    const text = (x, y, anchor, str, extra = "") => `<text x="${x}" y="${y}" text-anchor="${anchor}" ${extra}>${str}</text>`;
    let out = "";

    for (let v = -30; v <= 30; v += 2) {
        if (v % 10 !== 0) out += line("minor", left, py(v), right, py(v));
    }
    for (let v = -30; v <= 30; v += 10) {
        out += line(v === 0 ? "axis" : "major", left, py(v), right, py(v));
        out += line("axis", left - 9, py(v), left, py(v));
    }
    out += line("axis", left, top, left, bottom);
    for (let v = 5000; v <= 15000; v += 5000) {
        out += line("axis", px(v), py(0), px(v), py(0) + 9);
    }

    altitude.forEach((a, i) => {
        out += `<circle class="dot" cx="${px(a)}" cy="${py(error[i])}" r="9"/>`;
    });
    out += line("trend", px(100), py(-5.92), px(9750), py(1.98));

    for (let v = -30; v <= 30; v += 10) out += text(122, py(v) + 8, "end", v);
    for (let v = 0; v <= 15000; v += 5000) out += text(px(v), 399, "middle", v);

    out += text(558, 63, "middle", "Altimeter Error (Y)", 'class="chart-title"');
    out += text(402, 628, "middle", "Axis Title", 'class="axis-title"');
    out += text(0, 0, "middle", "Axis Title", 'class="axis-title" transform="translate(68 354) rotate(-90)"');
    out += text(338, 330, "middle", "y = 0.0008x - 6.0031");
    out += text(338, 364, "middle", 'R<tspan dy="-8" font-size="16">2</tspan><tspan dy="8"> = 0.0361</tspan>');

    // legend
    out += '<circle class="dot" cx="782" cy="317" r="9"/>';
    out += text(830, 326, "start", "Altimeter Error (Y)", 'class="legend"');
    out += line("trend", 743, 404, 820, 404);
    out += text(830, 412, "start", "Linear (Altimeter Error", 'class="legend"');
    out += text(830, 446, "start", "(Y))", 'class="legend"');
    document.getElementById("chart").innerHTML = out;
}

buildGrid();
buildChart();
```
